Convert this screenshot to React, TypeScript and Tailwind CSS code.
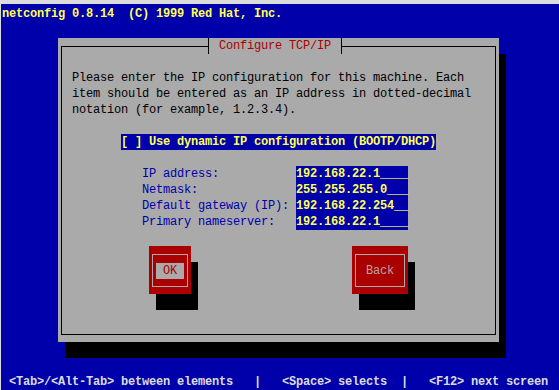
const mono = "font-['Liberation_Mono','DejaVu_Sans_Mono',monospace] text-[12px] leading-[16px] tracking-[-0.2px] whitespace-pre";

const fields = [
  { label: "IP address:", value: "192.168.22.1____" },
  { label: "Netmask:", value: "255.255.255.0___" },
  { label: "Default gateway (IP):", value: "192.168.22.254__" },
  { label: "Primary nameserver:", value: "192.168.22.1____" },
];

function Button({ text, width, focused }: { text: string; width: string; focused?: boolean }) {
  return (
    <div className={`${width} h-[48px] bg-[#aa0000] px-[3px] pt-[8px] pb-[7px] shadow-[7px_16px_0_#000]`}>
      <div className="h-full border border-[#aaaaaa] flex items-center justify-center">
        {focused ? (
          <span className="w-[28px] h-[16px] bg-[#aaaaaa] text-[#aa0000] text-center">{text}</span>
        ) : (
          <span className="h-[16px] text-[#b8a4a4]">{text}</span>
        )}
      </div>
    </div>
  );
}

export default function App() {
  return (
    <div className={`w-[559px] h-[390px] bg-[#dcdcdc] pt-[4px] pl-[1px] overflow-hidden ${mono}`}>
      <div className="h-[386px] bg-[#0000aa] pt-[2px] pl-[1px]">
        <div className="h-[16px] text-[#ffff55] font-bold">netconfig 0.8.14  (C) 1999 Red Hat, Inc.</div>

        <div className="mt-[16px] ml-[56px] w-[441px] h-[304px] bg-[#aaaaaa] shadow-[7px_16px_0_#000] flex flex-col">
          {/* title row sits on the frame line */}
          <div className="flex h-[16px] px-[3px] flex-none">
            <div className="w-[147px] h-[8px] mt-[8px] border-t border-l border-black" />
            <div className="w-[1px] h-[16px] bg-black" />
            <div className="w-[132px] pl-[10px] text-[#aa0000]">Configure TCP/IP</div>
            <div className="w-[1px] h-[16px] bg-black" />
            <div className="w-[154px] h-[8px] mt-[8px] border-t border-r border-black" />
          </div>

          <div className="flex-1 mx-[3px] mb-[7px] border-l border-r border-b border-black pt-[16px]">
            <div className="pl-[10px] text-black">
              <div>Please enter the IP configuration for this machine. Each</div>
              <div>item should be entered as an IP address in dotted-decimal</div>
              <div>notation (for example, 1.2.3.4).</div>
            </div>

            <div className="mt-[16px] ml-[59px] w-[315px] bg-[#0000aa] text-[#ffff55] font-bold">
              [ ] Use dynamic IP configuration (BOOTP/DHCP)
            </div>

            <div className="mt-[16px] ml-[80px] flex flex-col">
              {fields.map((f) => (
                <div key={f.label} className="flex h-[16px]">
                  <div className="w-[154px] text-[#0000aa]">{f.label}</div>
                  <div className="w-[112px] bg-[#0000aa] text-[#ffff55] font-bold">{f.value}</div>
                </div>
              ))}
            </div>

            <div className="mt-[16px] ml-[87px] flex gap-[161px]">
              <Button text="OK" width="w-[42px]" focused />
              <Button text="Back" width="w-[56px]" />
            </div>
          </div>
        </div>

        <div className="mt-[32px] h-[16px] text-[#dcdcdc] font-bold">
          {" <Tab>/<Alt-Tab> between elements   |   <Space> selects  |   <F12> next screen"}
        </div>
      </div>
    </div>
  );
}
